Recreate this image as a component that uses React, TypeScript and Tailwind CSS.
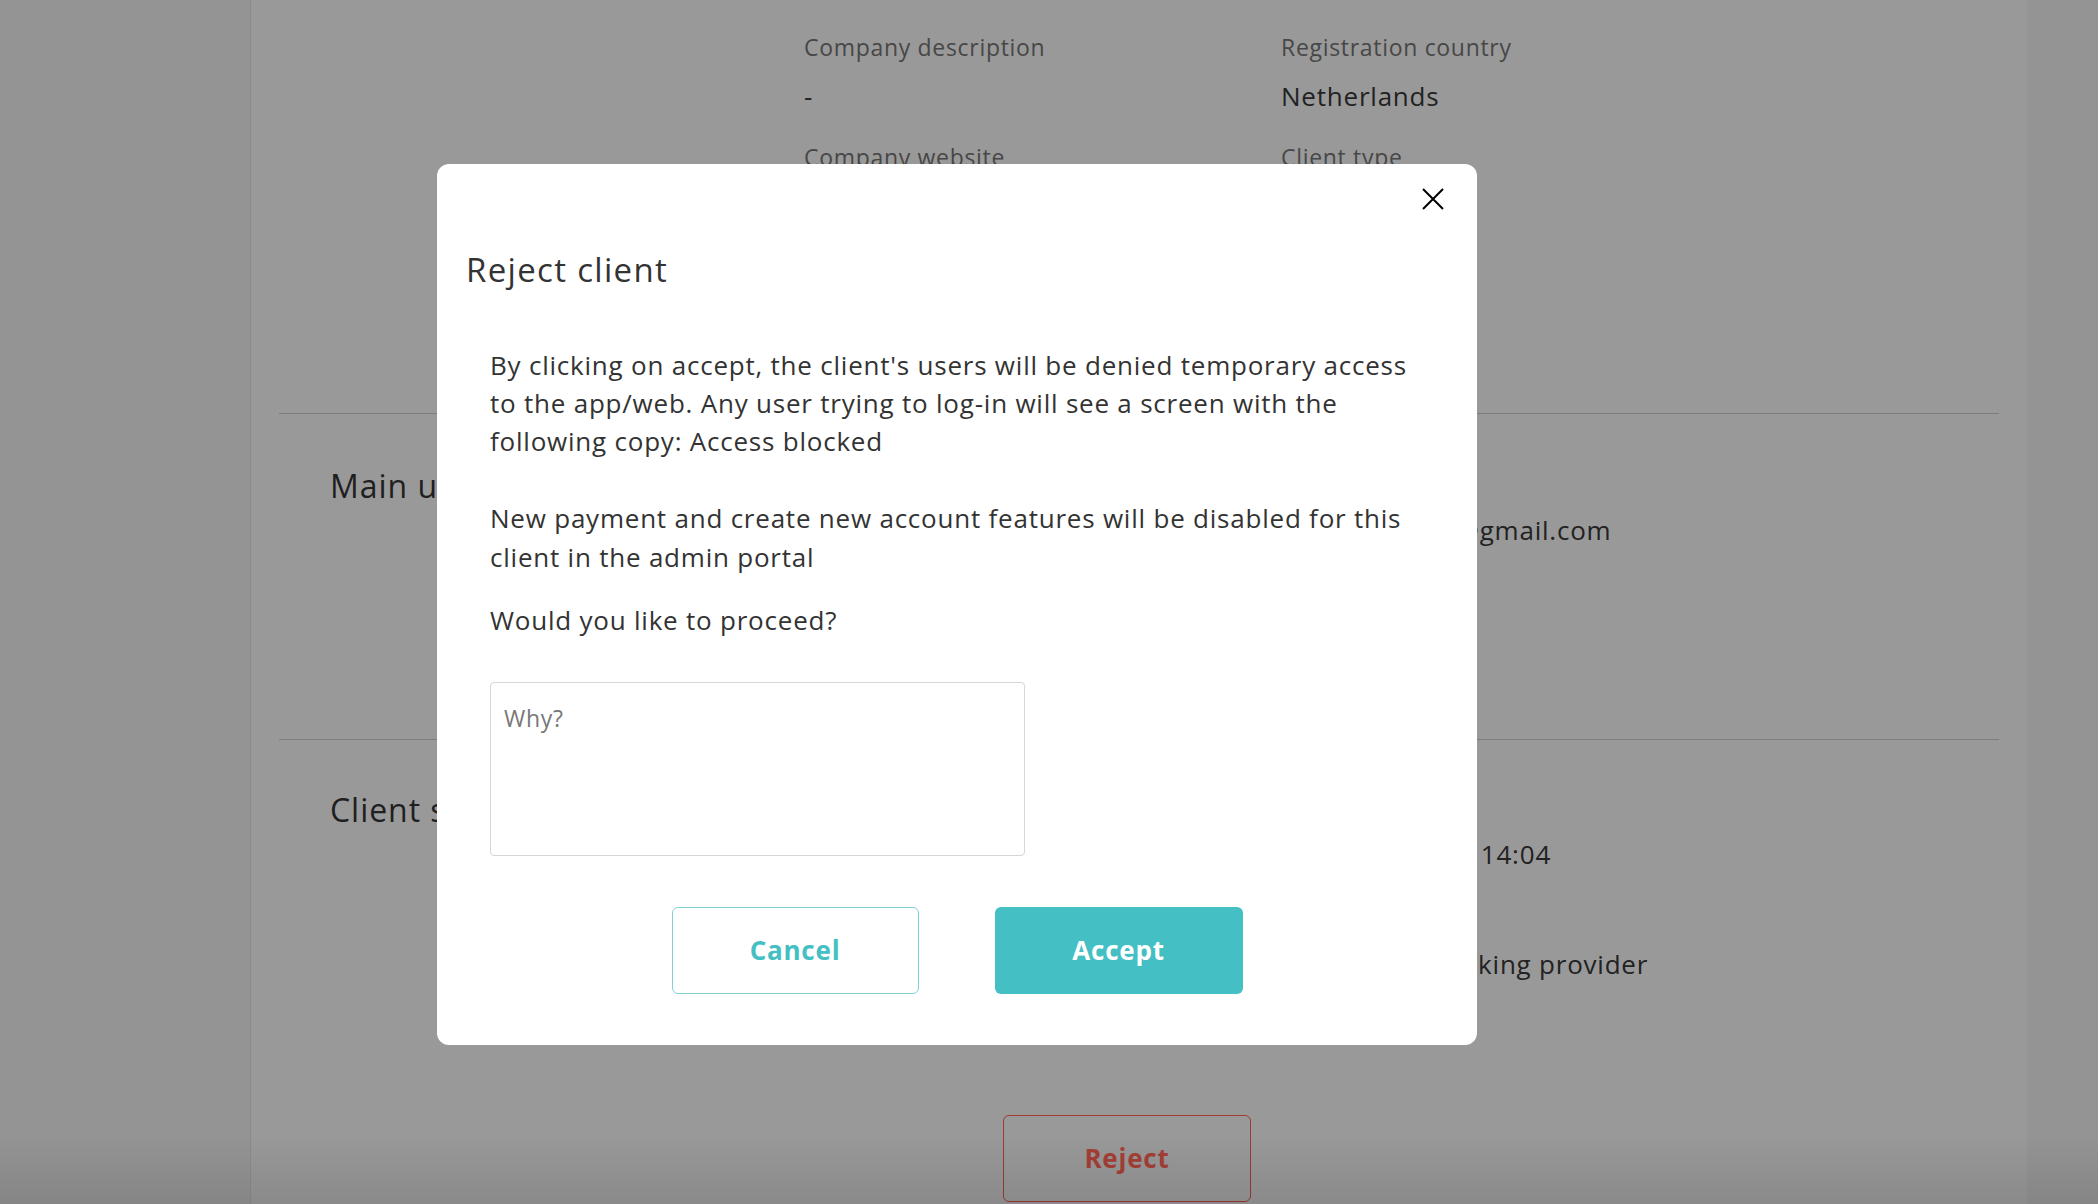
import React from "react";

const font = { fontFamily: '"Open Sans", "Noto Sans", Arial, sans-serif' };

function Field({ label, value }: { label: string; value: string }) {
  return (
    <div className="flex flex-col whitespace-nowrap">
      <span className="text-[23px] leading-[30px] tracking-[0.03em] text-[#474747]">{label}</span>
      <span className="mt-[18px] text-[26px] leading-[32px] tracking-[0.03em] text-[#222]">{value}</span>
    </div>
  );
}

export default function App() {
  return (
    <div className="relative min-h-screen w-full bg-[#949494] overflow-hidden" style={font}>
      {/* page behind the dim overlay */}
      <div className="flex h-[1204px]">
        <div className="w-[250px] shrink-0" />
        <div className="w-[1777px] shrink-0 border-l border-[#8c8c8c] bg-[#999999] px-[28px]">
          {/* company section */}
          <div className="grid grid-cols-[477px_1fr] gap-y-[30px] pl-[525px] pt-[32px] pb-[81px]">
            <Field label="Company description" value="-" />
            <Field label="Registration country" value="Netherlands" />
            <Field label="Company website" value="www.company.nl" />
            <Field label="Client type" value="Business" />
            <Field label="Registration number" value="12345678" />
            <Field label="Industry" value="Retail" />
          </div>
          {/* main user */}
          <div className="flex border-t border-[#7d7d7d] pb-[83px]">
            <div className="w-[525px] shrink-0 whitespace-nowrap pl-[51px] pt-[54px] text-[32px] leading-[36px] tracking-[0.03em] text-[#1f1f1f]">
              Main user
            </div>
            <div className="grid grid-cols-[477px_1fr] gap-y-[30px] pt-[52px]">
              <Field label="Full name" value="John Doe" />
              <Field label="Email" value="info.company@gmail.com" />
              <Field label="Phone" value="+31 6 12345678" />
              <Field label="Role" value="Owner" />
            </div>
          </div>
          {/* client status */}
          <div className="flex border-t border-[#7d7d7d]">
            <div className="w-[525px] shrink-0 whitespace-nowrap pl-[51px] pt-[52px] text-[32px] leading-[36px] tracking-[0.03em] text-[#1f1f1f]">
              Client status
            </div>
            <div className="flex flex-col pt-[50px]">
              <div className="grid grid-cols-[477px_1fr] gap-y-[30px]">
                <Field label="Status" value="Pending" />
                <Field label="Created at" value="22 Nov 2022 at 14:04" />
                <Field label="Onboarding" value="Manual" />
                <Field label="Provider" value="Authorized banking provider" />
              </div>
            </div>
          </div>
          <div className="flex pl-[724px] pt-[135px]">
            <button className="flex h-[87px] w-[248px] items-center justify-center rounded-[6px] border border-[#9e3a31] text-[26px] font-bold tracking-[0.03em] text-[#a53f35]">
              Reject
            </button>
          </div>
        </div>
      </div>

      {/* bottom shade */}
      <div className="pointer-events-none absolute inset-x-0 bottom-0 h-[70px] bg-gradient-to-b from-transparent to-black/10" />

      {/* modal */}
      <div className="absolute inset-0 flex items-center pl-[437px] pt-[5px]">
        <div className="relative flex w-[1040px] flex-col rounded-[12px] bg-white pl-[29px] pt-[88px] pb-[51px]">
          <button className="absolute right-[32px] top-[23px] text-black" aria-label="Close">
            <svg width="24" height="24" viewBox="0 0 24 24" fill="none" stroke="currentColor" strokeWidth="2">
              <path d="M2 2 L22 22 M22 2 L2 22" />
            </svg>
          </button>
          <h2 className="text-[33px] leading-[36px] tracking-[0.04em] text-[#333]">Reject client</h2>
          <div className="mt-[58px] pl-[24px] text-[26px] leading-[38.4px] tracking-[0.03em] text-[#333]">
            <div className="w-[935px]">
              <p>
                By clicking on accept, the client's users will be denied temporary access to the app/web. Any user
                trying to log-in will see a screen with the following copy: Access blocked
              </p>
              <p className="mt-[38.4px]">
                New payment and create new account features will be disabled for this client in the admin portal
              </p>
              <p className="mt-[25px]">Would you like to proceed?</p>
            </div>
            <textarea
              placeholder="Why?"
              className="mt-[43px] block h-[174px] w-[535px] resize-none rounded-[4px] border border-[#d6d6d6] px-[13px] pt-[20px] pb-[14px] text-[23px] leading-[30px] tracking-[0.03em] text-[#333] placeholder:text-[#777] outline-none"
            />
          </div>
          <div className="mt-[51px] flex justify-center gap-[76px] pr-[29px]">
            <button className="flex h-[87px] w-[247px] items-center justify-center rounded-[6px] border border-[#7fd3d6] bg-white text-[26px] font-bold tracking-[0.03em] text-[#44bfc3]">
              Cancel
            </button>
            <button className="flex h-[87px] w-[248px] items-center justify-center rounded-[6px] bg-[#44bfc3] text-[26px] font-bold tracking-[0.03em] text-white">
              Accept
            </button>
          </div>
        </div>
      </div>
    </div>
  );
}
